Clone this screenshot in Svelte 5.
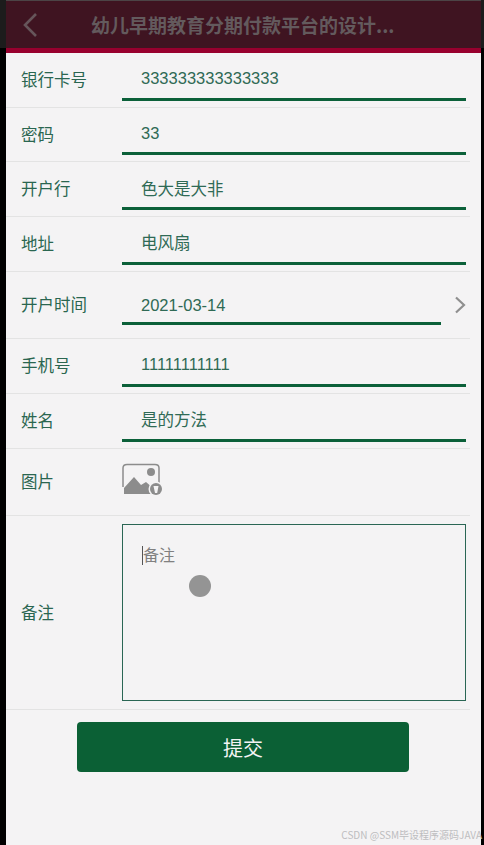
<script>
  const fields = [
    { label: "银行卡号", value: "333333333333333", h: 55, pad: 12 },
    { label: "密码", value: "33", h: 54, pad: 12 },
    { label: "开户行", value: "色大是大非", h: 55, pad: 14 },
    { label: "地址", value: "电风扇", h: 55, pad: 13 },
    { label: "开户时间", value: "2021-03-14", h: 67, pad: 20, arrow: true },
    { label: "手机号", value: "11111111111", h: 55, pad: 12 },
    { label: "姓名", value: "是的方法", h: 55, pad: 13 }
  ];
</script>

<div class="screen">
  <div class="page">
    <header>
      <div class="bar">
        <svg class="back" width="16" height="26" viewBox="0 0 16 26">
          <path d="M14 2 L3 13 L14 24" fill="none" stroke="#66555a" stroke-width="2.6" />
        </svg>
        <h1>幼儿早期教育分期付款平台的设计...</h1>
      </div>
    </header>

    <form>
      {#each fields as f}
        <div class="row" style="height: {f.h}px">
          <span class="label">{f.label}</span>
          <div class="field" class:short={f.arrow} style="padding-top: {f.pad}px">
            <span class="value">{f.value}</span>
          </div>
          {#if f.arrow}
            <svg class="arrow" width="12" height="18" viewBox="0 0 12 18">
              <path d="M2 1.5 L10 9 L2 16.5" fill="none" stroke="#8f8f8f" stroke-width="2.2" />
            </svg>
          {/if}
        </div>
      {/each}

      <div class="row pic">
        <span class="label">图片</span>
        <svg class="pic-icon" width="42" height="36" viewBox="0 0 42 36">
          <path d="M1 24 V5 Q1 1.5 5 1.5 H33 Q37 1.5 37 5 V20" fill="none" stroke="#8c8c8c" stroke-width="1.5" />
          <circle cx="29" cy="9" r="4" fill="#8c8c8c" />
          <path d="M2 31 V25 L12 14 L19 22 L24 19 L32 26 V31 Z" fill="#8c8c8c" />
          <circle cx="34" cy="26" r="7.5" fill="#f4f3f4" />
          <circle cx="34" cy="26" r="6" fill="#8c8c8c" />
          <path d="M31.5 23 H36.5 L35.2 30 H33 Z" fill="#f4f3f4" />
        </svg>
      </div>

      <div class="row memo">
        <span class="label">备注</span>
        <div class="box">
          <span class="caret"></span><span class="placeholder">备注</span>
          <span class="touch"></span>
        </div>
      </div>

      <div class="actions">
        <button type="button">提交</button>
      </div>
    </form>
    <span class="mark">CSDN @SSM毕设程序源码JAVA</span>
  </div>
</div>

<style>
  :global(body) {
    background: #000;
  }
  .screen {
    width: 484px;
    height: 845px;
    padding: 0 3px 0 6px;
    box-sizing: border-box;
    background: linear-gradient(#1c1c1c 48px, #000 48px);
    overflow: hidden;
  }
  .page {
    position: relative;
    height: 845px;
    background: #f4f3f4;
    font-family: "Noto Sans CJK SC", "Liberation Sans", sans-serif;
  }
  header {
    height: 53px;
    box-sizing: border-box;
    background: #3f1421;
    border-top: 1px solid #4c4446;
    border-bottom: 5px solid #98002e;
  }
  .bar {
    display: flex;
    align-items: center;
    height: 47px;
    padding-left: 16px;
  }
  .back {
    flex: none;
  }
  h1 {
    margin: 0 0 0 53px;
    font-size: 19px;
    font-weight: 700;
    line-height: 47px;
    color: #635a5d;
    white-space: nowrap;
  }
  .row {
    position: relative;
    display: flex;
    align-items: center;
    box-sizing: border-box;
    margin-right: 11px;
    padding-left: 15px;
    border-bottom: 1px solid #e3e3e3;
  }
  .label {
    width: 101px;
    flex: none;
    padding-bottom: 2px;
    font-size: 16.5px;
    color: #2a6650;
  }
  .field {
    align-self: flex-end;
    box-sizing: border-box;
    width: 344px;
    margin-right: -11px;
    padding-left: 19px;
    border-bottom: 3px solid #0b6039;
    margin-bottom: 6px;
    height: calc(100% - 6px);
  }
  .field.short {
    width: 319px;
    margin-right: 0;
    margin-bottom: 13px;
    height: calc(100% - 13px);
  }
  .value {
    font-size: 16.5px;
    line-height: 24px;
    color: #2f6a55;
    font-family: "Liberation Sans", "Noto Sans CJK SC", sans-serif;
  }
  .arrow {
    position: absolute;
    right: 4px;
    top: 24px;
  }
  .pic {
    height: 67px;
  }
  .pic-icon {
    margin-top: -3px;
  }
  .memo {
    height: 194px;
  }
  .box {
    position: relative;
    box-sizing: border-box;
    width: 344px;
    height: 177px;
    margin-right: -11px;
    padding: 18px 0 0 19px;
    border: 1px solid #2a6654;
    display: flex;
    align-items: flex-start;
  }
  .caret {
    width: 1px;
    height: 19px;
    background: #555;
    margin-top: 3px;
  }
  .placeholder {
    font-size: 16px;
    line-height: 22px;
    color: #808080;
  }
  .touch {
    position: absolute;
    left: 66px;
    top: 50px;
    width: 22px;
    height: 22px;
    border-radius: 50%;
    background: #949494;
  }
  .actions {
    padding: 12px 0 0 71px;
  }
  button {
    display: block;
    width: 332px;
    height: 50px;
    border: 0;
    border-radius: 4px;
    background: #0b6035;
    color: #f4f4f4;
    font-family: inherit;
    font-size: 20px;
  }
  .mark {
    position: absolute;
    right: -1px;
    bottom: 3px;
    font-size: 10px;
    line-height: 14px;
    color: #bdbdbf;
    white-space: nowrap;
  }
</style>
